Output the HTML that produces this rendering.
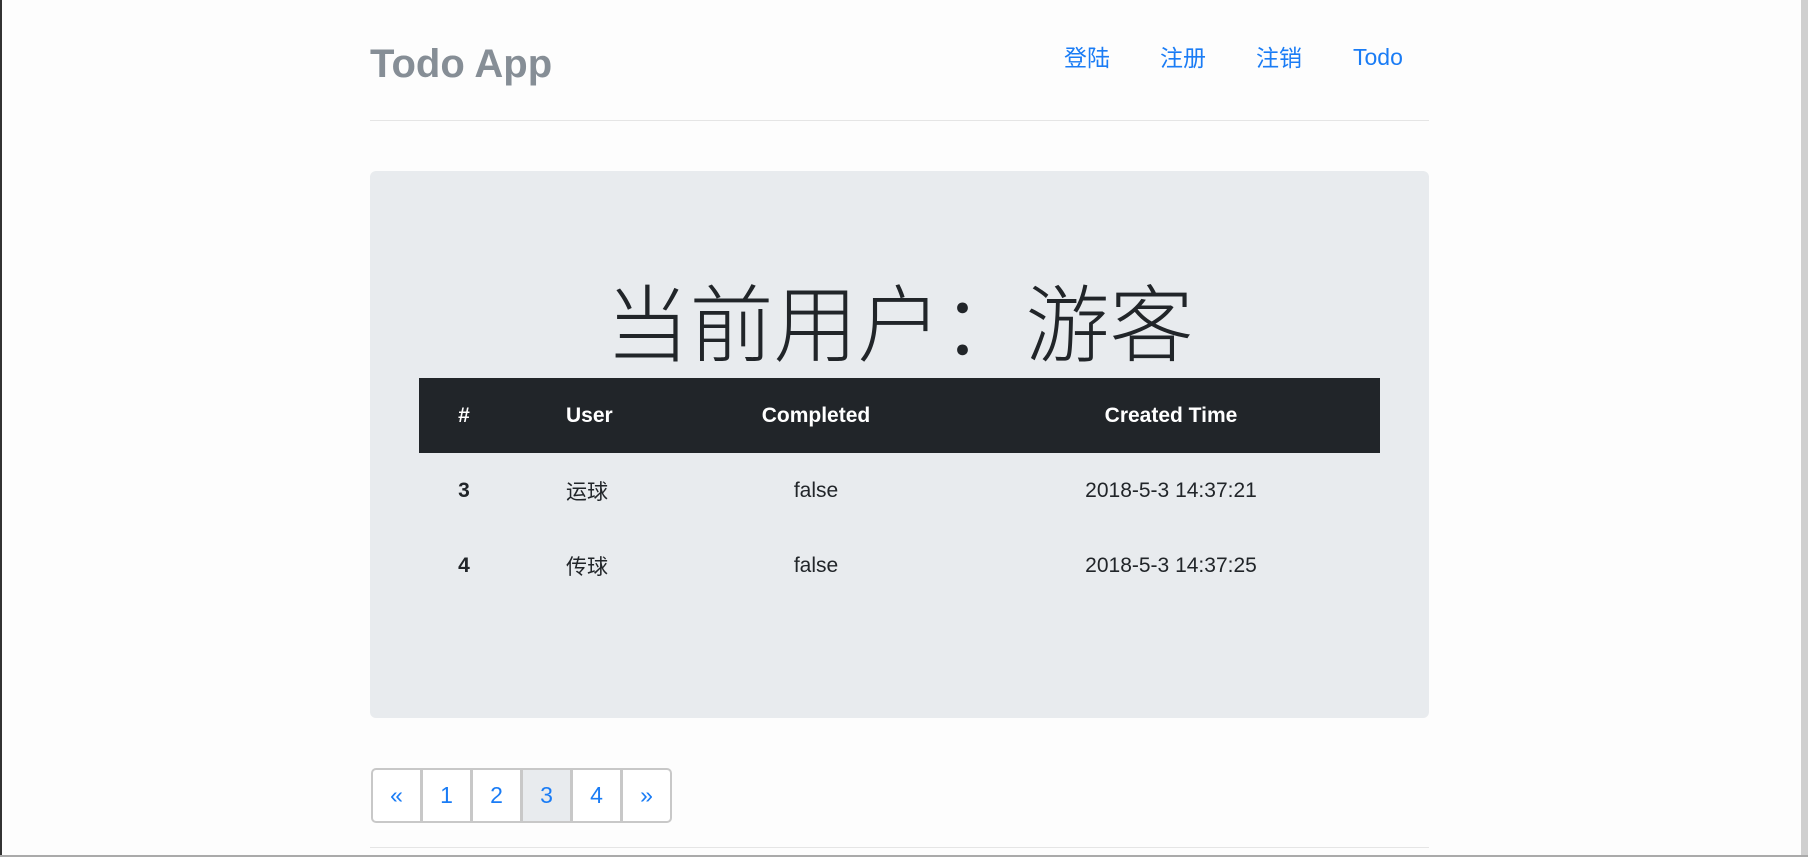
<!DOCTYPE html>
<html><head><meta charset="utf-8"><style>
*{margin:0;padding:0;box-sizing:border-box}
html,body{width:1808px;height:857px;overflow:hidden;background:#fdfdfd;font-family:"Liberation Sans","Noto Sans CJK SC",sans-serif;position:relative}
.a{position:absolute}
.nav a{position:absolute;top:42px;color:#1a7cf5;font-size:23px;text-decoration:none;line-height:30px}
.nav a.c{top:43px}
th,td{font-size:21px;height:75px}
table{border-collapse:collapse;width:961px;table-layout:fixed}
th{background:#212529;color:#fff;font-weight:bold}
td{color:#212529}
.pg{position:absolute;top:768px;height:55px;width:51px;border:2px solid #c8c8c8;color:#1a7cf5;font-size:23px;text-align:center;line-height:51px;background:#fff}
</style></head><body>
<div class="a" style="left:0;top:0;width:2px;height:857px;background:#333"></div>
<div class="a" style="right:0;top:0;width:7px;height:857px;background:#cfcfcf"></div>
<div class="a" style="left:370px;top:42px;font-size:40px;color:#868e96;font-weight:bold">Todo App</div>
<div class="nav"><a class="c" style="left:1064px">登陆</a><a class="c" style="left:1160px">注册</a><a class="c" style="left:1256px">注销</a><a style="left:1353px">Todo</a></div>
<div class="a" style="left:370px;top:120px;width:1059px;height:1px;background:#e5e5e5"></div>
<div class="a" style="left:370px;top:171px;width:1059px;height:547px;background:#e8ebee;border-radius:6px"></div>
<div class="a" style="left:370px;top:268px;width:1059px;text-align:center;font-size:84px;color:#212529;font-family:'Noto Sans CJK SC',sans-serif;font-weight:300;line-height:104px">当前用户：游客</div>
<table class="a" style="left:419px;top:378px">
<col style="width:90px"><col style="width:191px"><col style="width:232px"><col>
<tr><th>#</th><th style="text-align:left;padding-left:57px">User</th><th>Completed</th><th style="padding-left:30px">Created Time</th></tr>
<tr><td style="text-align:center;font-weight:bold">3</td><td style="padding-left:57px">运球</td><td style="text-align:center">false</td><td style="text-align:center;padding-left:30px">2018-5-3 14:37:21</td></tr>
<tr><td style="text-align:center;font-weight:bold">4</td><td style="padding-left:57px">传球</td><td style="text-align:center">false</td><td style="text-align:center;padding-left:30px">2018-5-3 14:37:25</td></tr>
</table>
<div class="pg" style="left:371px;border-radius:5px 0 0 5px">«</div>
<div class="pg" style="left:421px">1</div>
<div class="pg" style="left:471px">2</div>
<div class="pg" style="left:521px;background:#e8ebee">3</div>
<div class="pg" style="left:571px">4</div>
<div class="pg" style="left:621px;border-radius:0 5px 5px 0">»</div>
<div class="a" style="left:370px;top:847px;width:1059px;height:1px;background:#e5e5e5"></div>
<div class="a" style="left:0;top:855px;width:1808px;height:2px;background:#aaa"></div>
</body></html>
